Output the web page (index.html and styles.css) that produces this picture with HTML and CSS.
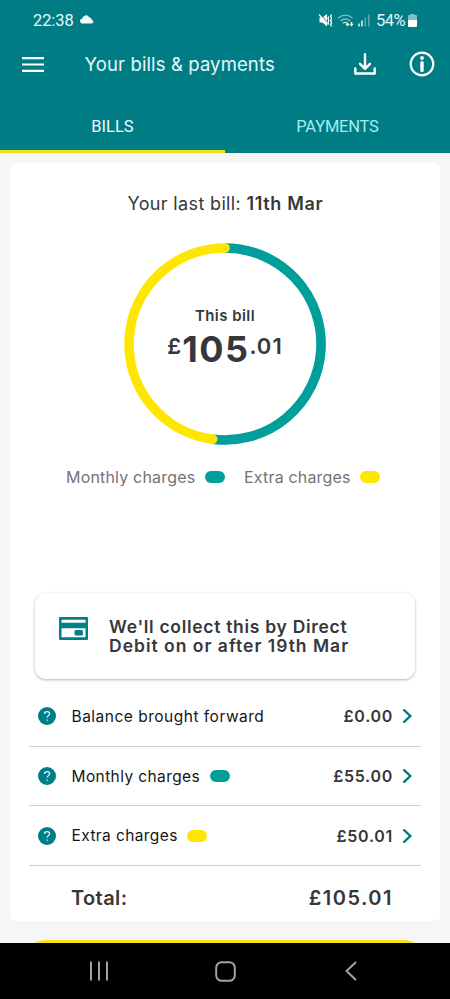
FILE: index.html
```html
<!DOCTYPE html>
<html lang="en">
<head>
<meta charset="utf-8">
<title>Your bills &amp; payments</title>
<link rel="stylesheet" href="styles.css">
</head>
<body>
<div class="phone">
  <header class="header">
    <div class="status">
      <span class="clock">22:38</span>
      <svg class="cloud" width="14" height="9" viewBox="0 0 14 9"><path fill="#f2fcfd" d="M3 8.6A2.6 2.6 0 0 1 2.3 3.4 3.7 3.7 0 0 1 9.2 2.3 2.7 2.7 0 0 1 11.7 4.7 2 2 0 0 1 11.8 8.6Z"/></svg>
      <svg class="signals" width="51" height="15" viewBox="0 0 51 15">
        <path fill="#fff" d="M.5 4.500h3l4.500-3.500v12.500l-4.500-4h-3z"/>
        <path stroke="#fff" stroke-width="1.300" d="M0 1.500l8.500 10"/>
        <path stroke="#007c85" stroke-width=".8" d="M1.200 .8l8 9.500"/>
        <path fill="none" stroke="#fff" stroke-width="1.300" d="M9.800 3.500l-.8 2 .8 2-.8 2 .8 2M12.500 1.500l-.8 2 .8 2-.8 2 .8 2-.8 2 .8 2"/>
        <g fill="none" stroke="#7fbdc2" stroke-width="1.300"><path d="M19 5.300q7.300-6.200 14.600 0M21.500 8q4.800-4 9.700 0"/><path stroke="#c3e0e2" d="M24 10.300q2.300-1.800 4.600 0"/></g>
        <path fill="#fff" d="M28.500 9.500l2 2.500h-1.200v1h-1.600v-1h-1.200zM32.500 13.500l-2-2.500h1.200v-2h1.600v2h1.200z"/>
        <path stroke="#e8f5f6" stroke-width="1.500" d="M40 13.500v-3M43 13.500v-6"/>
        <path stroke="#62aab0" stroke-width="1.500" d="M46.300 13.500v-9M49.700 13.500v-12"/>
      </svg>
      <span class="percent">54%</span>
      <svg class="battery" width="9" height="13" viewBox="0 0 9 13"><path fill="#80bdc2" d="M0 2q0-1 1-1h1.500V0h4v1H8q1 0 1 1v4H0z"/><path fill="#fff" d="M0 6h9v6q0 1-1 1H1q-1 0-1-1z"/></svg>
    </div>
    <div class="appbar">
      <svg class="menu" width="22" height="15" viewBox="0 0 22 15"><path stroke="#fff" stroke-width="2.200" d="M0 1.200h22M0 7.500h22M0 13.800h22"/></svg>
      <h1 class="title">Your bills &amp; payments</h1>
      <svg class="download" width="22" height="22" viewBox="0 0 22 22" fill="none" stroke="#fff" stroke-width="2.400" stroke-linecap="round" stroke-linejoin="round"><path d="M11 1.200v14M6 10.800l5 5 5-5M1.300 15.500v5h19.400v-5"/></svg>
      <svg class="info" width="26" height="26" viewBox="0 0 26 26"><circle cx="13" cy="13" r="11.300" fill="none" stroke="#fff" stroke-width="2.200"/><circle cx="13" cy="7" r="1.900" fill="#fff"/><path stroke="#fff" stroke-width="3.400" stroke-linecap="round" d="M13 11.600v8"/></svg>
    </div>
    <nav class="tabs"><span class="tab active">BILLS</span><span class="tab">PAYMENTS</span></nav>
  </header>
  <main class="content">
    <section class="card">
      <p class="last"><span class="t-last">Your last bill:</span><b class="t-date">11th Mar</b></p>
      <div class="donut">
        <svg class="ring" width="202" height="202" viewBox="0 0 202 202" fill="none" stroke-width="9.600" stroke-linecap="round">
          <path stroke="#009f9c" stroke-linecap="butt" d="M101 5A96 96 0 1 1 88.700 196.200"/>
          <path stroke="#ffe600" d="M88.700 196.200A96 96 0 0 1 101 5"/>
        </svg>
        <div class="amount">
          <div class="this">This bill</div>
          <div class="sum"><span class="small">£</span><span class="big">105</span><span class="small pence">.01</span></div>
        </div>
      </div>
      <div class="legend">
        <span class="lg1">Monthly charges</span><i class="pill teal"></i>
        <span class="lg2">Extra charges</span><i class="pill yellow"></i>
      </div>
      <div class="notice">
        <svg class="bank" width="29" height="23" viewBox="0 0 29 23"><path fill="#008087" fill-rule="evenodd" d="M1 0h27q1 0 1 1v21q0 1-1 1H1q-1 0-1-1V1q0-1 1-1zM2.500 2.700v3.100h24V2.700zM2.500 11.300v9h24v-9z"/><rect x="15.500" y="13" width="8.500" height="5.500" rx="1.500" fill="#008087"/></svg>
        <div class="notice-text"><div class="n1">We'll collect this by Direct</div><div class="n2">Debit on or after 19th Mar</div></div>
      </div>
      <div class="rows">
        <div class="row"><svg class="help" width="18" height="18" viewBox="0 0 18 18"><circle cx="9" cy="9" r="9" fill="#007e86"/><path d="M6.500 7.100q0-2.500 2.600-2.500t2.600 2.200c0 1.700-2.500 1.700-2.500 3.700M9.200 12.600v1.200" fill="none" stroke="#d8f4f4" stroke-width="1.300"/></svg><span class="label r1">Balance brought forward</span><b class="value v1">£0.00</b><svg class="chev" width="9" height="14" viewBox="0 0 9 14"><path d="M1.200 1.200L7.300 7l-6.100 5.800" fill="none" stroke="#007e7c" stroke-width="2.400" stroke-linecap="round"/></svg></div>
        <div class="row"><svg class="help" width="18" height="18" viewBox="0 0 18 18"><circle cx="9" cy="9" r="9" fill="#007e86"/><path d="M6.500 7.100q0-2.500 2.600-2.500t2.600 2.200c0 1.700-2.500 1.700-2.500 3.700M9.200 12.600v1.200" fill="none" stroke="#d8f4f4" stroke-width="1.300"/></svg><span class="label r2">Monthly charges</span><i class="pill teal"></i><b class="value v2">£55.00</b><svg class="chev" width="9" height="14" viewBox="0 0 9 14"><path d="M1.200 1.200L7.300 7l-6.100 5.800" fill="none" stroke="#007e7c" stroke-width="2.400" stroke-linecap="round"/></svg></div>
        <div class="row"><svg class="help" width="18" height="18" viewBox="0 0 18 18"><circle cx="9" cy="9" r="9" fill="#007e86"/><path d="M6.500 7.100q0-2.500 2.600-2.500t2.600 2.200c0 1.700-2.500 1.700-2.500 3.700M9.200 12.600v1.200" fill="none" stroke="#d8f4f4" stroke-width="1.300"/></svg><span class="label r3">Extra charges</span><i class="pill yellow"></i><b class="value v3">£50.01</b><svg class="chev" width="9" height="14" viewBox="0 0 9 14"><path d="M1.200 1.200L7.300 7l-6.100 5.800" fill="none" stroke="#007e7c" stroke-width="2.400" stroke-linecap="round"/></svg></div>
        <div class="total"><b class="t-total">Total:</b><b class="t-sum">£105.01</b></div>
      </div>
    </section>
    <div class="cta"></div>
  </main>
  <footer class="navbar">
    <svg width="20" height="20" viewBox="0 0 20 20"><path stroke="#a2a2a2" stroke-width="2" d="M2 .5v19M10 .5v19M18 .5v19"/></svg>
    <svg width="21" height="21" viewBox="0 0 21 21"><rect x="1.200" y="1.200" width="18.600" height="18.600" rx="5.500" fill="none" stroke="#a2a2a2" stroke-width="2"/></svg>
    <svg width="12" height="20" viewBox="0 0 12 20"><path d="M11 1L1.500 10l9.500 9" fill="none" stroke="#a2a2a2" stroke-width="2"/></svg>
  </footer>
</div>
</body>
</html>
```
FILE: styles.css
```css
* { box-sizing: border-box; }
body { margin: 0; font-family: Inter, "Noto Sans", sans-serif; color: #37373b; }
svg { display: block; flex: none; }
.phone { width: 450px; height: 999px; display: flex; flex-direction: column; overflow: hidden; background: #f6f6f6; }
.header { height: 153px; flex: none; background: #007c85; color: #fff; }
.status { height: 41px; display: flex; align-items: center; padding-left: 33px; font: 16.500px Roboto, sans-serif; color: #e4f8f9; }
.clock { width: 47px; letter-spacing: -.1px; }
.cloud { margin-top: -2px; }
.signals { margin-left: 225px; margin-right: 6px; }
.percent { width: 32px; white-space: nowrap; letter-spacing: -.5px; }
.appbar { height: 46px; display: flex; align-items: center; padding-left: 22px; }
.title { margin: 0 0 0 40.500px; width: 269.500px; font-size: 18.500px; font-weight: 400; letter-spacing: .12px; white-space: nowrap; color: #e4f8f9; }
.download { margin-right: 33px; }
.tabs { height: 66px; display: flex; font: 16.500px Roboto, sans-serif; }
.tab { flex: 1; display: flex; align-items: center; justify-content: center; padding-top: 15px; border-bottom: 3px solid transparent; color: #a5edf0; letter-spacing: -.2px; }
.tab.active { color: #effcfd; border-color: #e9e31b; letter-spacing: 0; }
.content { height: 790px; flex: none; padding: 10px 10px 0; overflow: hidden; }
.card { height: 758px; background: #fff; border-radius: 6px; padding: 30px 19px 0; }
.last { margin: 0; height: 22px; line-height: 22px; padding-left: 98.500px; display: flex; font-size: 18px; white-space: nowrap; }
.t-last { width: 119px; letter-spacing: .35px; }
.t-date { font-weight: 600; letter-spacing: .65px; }
.donut { width: 202px; height: 202px; margin: 28px 0 0 95px; position: relative; }
.amount { position: absolute; inset: 62px 0 0; text-align: center; }
.this { font-size: 15px; font-weight: 600; line-height: 21px; letter-spacing: .45px; }
.sum { display: flex; justify-content: center; height: 44px; font-weight: 600; }
.big { font-size: 36px; font-weight: 700; line-height: 46px; letter-spacing: 1.500px; }
.small { font-size: 22px; line-height: 41px; letter-spacing: 1px; }
.legend { margin-top: 21px; padding-left: 37px; height: 22px; display: flex; align-items: center; font-size: 16px; letter-spacing: .18px; color: #737377; white-space: nowrap; }
.lg1 { width: 139px; }
.lg2 { width: 116px; margin-left: 19px; }
.pill { width: 20px; height: 12px; border-radius: 6px; flex: none; }
.teal { background: #009f9c; }
.yellow { background: #ffe600; }
.notice { margin: 105px 6px 0 6px; height: 86px; border-radius: 11px; box-shadow: 0 1px 3px rgba(0,0,0,.3); padding: 24px 0 0 24px; display: flex; }
.notice-text { margin-left: 21px; font-size: 17.500px; font-weight: 600; line-height: 19px; letter-spacing: .7px; white-space: nowrap; }
.n2 { letter-spacing: 1px; }
.rows { margin-top: 8px; }
.row { height: 59.700px; border-bottom: 1.500px solid #cfcfcf; display: flex; align-items: center; padding: 0 9px; font-size: 15.500px; color: #151515; white-space: nowrap; }
.label { margin-left: 15.500px; letter-spacing: .4px; }
.r1 { letter-spacing: .5px; }
.row .pill { margin-left: 9.500px; }
.value { margin-left: auto; font-size: 16px; font-weight: 600; letter-spacing: .7px; color: #37373b; }
.chev { margin-left: 10px; }
.total { height: 62px; display: flex; justify-content: space-between; align-items: center; padding: 1px 28px 0 42px; font-size: 20px; }
.total b { font-weight: 600; letter-spacing: .4px; }
.total .t-sum { letter-spacing: 1.500px; }
.cta { margin: 19px 14px 0; height: 50px; border-radius: 22px; background: #f5e115; }
.navbar { height: 56px; flex: none; background: #000; display: grid; grid-template-columns: 1fr 1fr 1fr; align-items: center; justify-items: center; padding: 0 36px; }
```
